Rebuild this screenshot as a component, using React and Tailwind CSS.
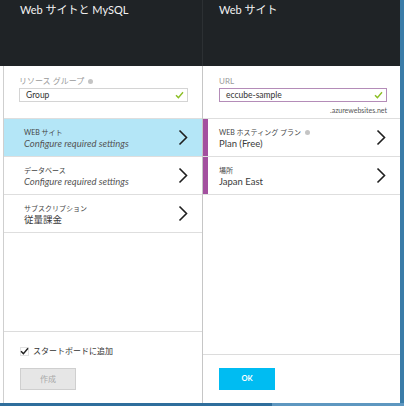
import React from "react";

const font = { fontFamily: 'Lato, "Noto Sans CJK JP", sans-serif' };

const Chevron = () => (
  <svg width="10" height="17" viewBox="0 0 10 17" className="shrink-0">
    <path d="M1.5 1.5 L8.5 8.5 L1.5 15.5" fill="none" stroke="#1f1f1f" strokeWidth="1.6" />
  </svg>
);

const Check = ({ color = "#8cbf26" }) => (
  <svg width="9" height="8" viewBox="0 0 9 8" className="shrink-0">
    <path d="M1 4.2 L3.4 6.6 L8 1.2" fill="none" stroke={color} strokeWidth="1.4" />
  </svg>
);

const Info = () => (
  <span className="ml-1 inline-block h-[5px] w-[5px] rounded-full bg-[#c4c4c4] align-middle" />
);

const Row = ({ label, value, italic, selected, marked, info }) => (
  <div
    className={`flex h-[38px] items-center border-b border-[#dedede] ${
      selected ? "bg-[#b4e6f7]" : "bg-white"
    }`}
  >
    <div className={`h-full w-[5px] shrink-0 ${marked ? "bg-[#a3509f]" : ""}`} />
    <div className={`flex flex-1 flex-col justify-center pt-[2px] ${marked ? "pl-[11px]" : "pl-[15px]"}`}>
      <div className="text-[7px] leading-[10px] text-[#444]">
        {label}
        {info && <Info />}
      </div>
      <div
        className={`text-[9.5px] leading-[14px] ${
          italic ? "italic text-[#555]" : "text-[#3a3a3a]"
        }`}
      >
        {value}
      </div>
    </div>
    <div className="pr-[14px]">
      <Chevron />
    </div>
  </div>
);

export default function App() {
  return (
    <div className="flex h-[406px] w-[404px] flex-col bg-white" style={font}>
      <div className="flex h-[403px]">
        <div className="flex flex-1 flex-col">
          <div className="flex h-[66px] bg-[#1f2326]">
            <div className="w-[202px] pl-[20px] pt-[2px] text-[11px] text-[#f2f2f2]">
              Web サイトと MySQL
            </div>
            <div className="w-px bg-[#2c3033]" />
            <div className="flex-1 pl-[16px] pt-[2px] text-[11px] text-[#f2f2f2]">Web サイト</div>
          </div>
          <div className="flex flex-1">
            {/* left blade */}
            <div className="ml-[3px] flex w-[199px] flex-col border-l border-[#cfcfcf]">
              <div className="h-[53px] border-b border-[#dedede] pl-[15px] pr-[14px] pt-[10px]">
                <div className="text-[8px] leading-[10px] text-[#9a9a9a]">
                  リソース グループ
                  <Info />
                </div>
                <div className="mt-[2px] flex h-[14px] items-center justify-between border border-[#d4d4d4] pl-[6px] pr-[3px] text-[8.5px] text-[#333]">
                  Group
                  <Check />
                </div>
              </div>
              <Row label="WEB サイト" value="Configure required settings" italic selected />
              <Row label="データベース" value="Configure required settings" italic />
              <Row label="サブスクリプション" value="従量課金" />
              <div className="flex-1" />
              <div className="h-[72px] border-t border-[#dcdcdc] pl-[16px] pt-[13px]">
                <div className="flex items-center gap-[4px] text-[8px] text-[#333]">
                  <span className="flex h-[9px] w-[9px] items-center justify-center border border-[#e2e2e2]">
                    <Check color="#222" />
                  </span>
                  スタートボードに追加
                </div>
                <div className="mt-[11px] flex h-[22px] w-[56px] items-center justify-center border border-[#cfcfcf] bg-[#e6e6e6] text-[8px] text-[#a8a8a8]">
                  作成
                </div>
              </div>
            </div>
            <div className="w-px bg-[#c6c6c6]" />
            {/* right blade */}
            <div className="flex flex-1 flex-col">
              <div className="h-[53px] border-b border-[#dedede] pl-[16px] pr-[13px] pt-[10px]">
                <div className="text-[8px] leading-[10px] text-[#9a9a9a]">URL</div>
                <div className="mt-[2px] flex h-[14px] items-center justify-between border border-[#b48cb8] pl-[6px] pr-[3px] text-[8.5px] text-[#333]">
                  eccube-sample
                  <Check />
                </div>
                <div className="mt-[4px] text-right text-[7px] leading-[9px] text-[#555]">
                  .azurewebsites.net
                </div>
              </div>
              <Row label="WEB ホスティング プラン" value="Plan (Free)" marked info />
              <Row label="場所" value="Japan East" marked />
              <div className="flex-1" />
              <div className="h-[49px] border-t border-[#dcdcdc] pl-[16px] pt-[13px]">
                <div className="flex h-[22px] w-[56px] items-center justify-center bg-[#00bcf2] text-[7.5px] font-bold text-white">
                  OK
                </div>
              </div>
            </div>
          </div>
        </div>
        <div className="w-[4px] bg-[#3a7ca8]" />
      </div>
      <div className="flex h-[3px]">
        <div className="w-[272px] bg-[#2f6e9c]" />
        <div className="flex-1 bg-[#5e97c0]" />
      </div>
    </div>
  );
}
